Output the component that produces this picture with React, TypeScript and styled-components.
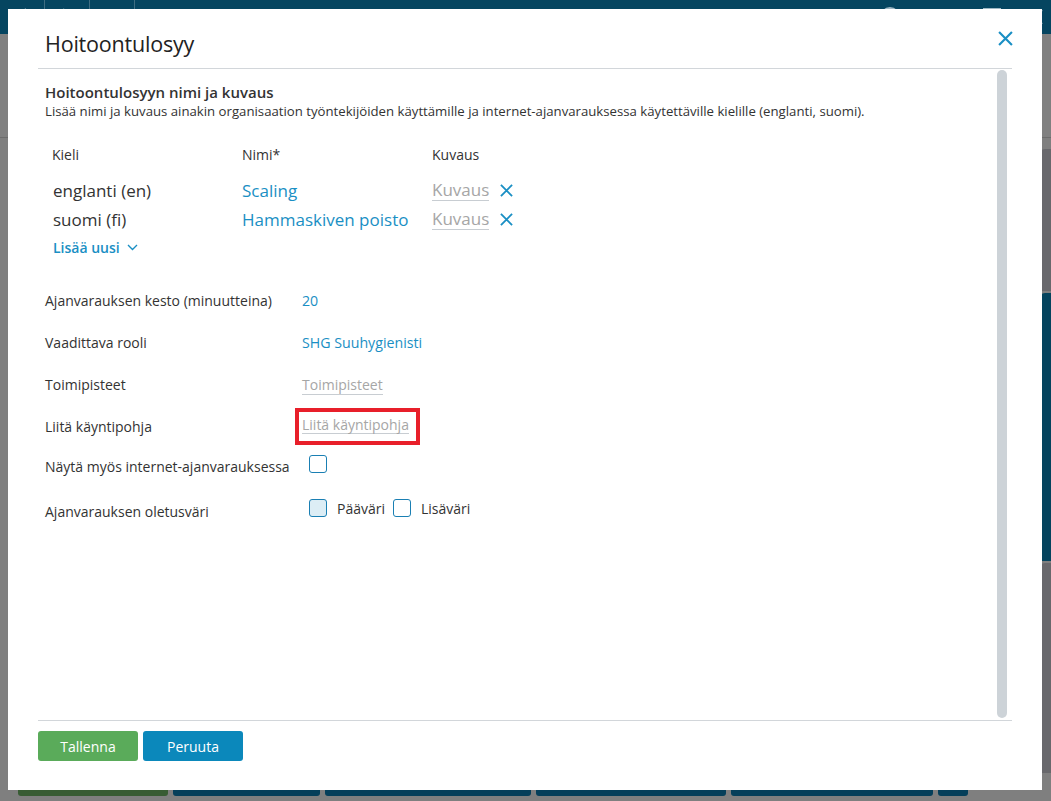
import React from "react";
import styled, { createGlobalStyle } from "styled-components";

const GlobalStyle = createGlobalStyle`
  html, body { margin: 0; padding: 0; }
  body {
    font-family: "Open Sans", "Noto Sans", Arial, sans-serif;
    color: #333;
    background: #7f7f7f;
  }
  * { box-sizing: border-box; }
`;

const Page = styled.div`
  position: relative;
  width: 1051px;
  height: 801px;
  overflow: hidden;
  display: flex;
  flex-direction: column;
  background: #7f7f7f;
`;

const TopBar = styled.div`
  height: 34px;
  background: #054560;
  display: flex;
  align-items: center;
  color: #9fb8c4;
`;

const NavCell = styled.div`
  width: 45px;
  height: 34px;
  border-right: 1px solid #3f6d82;
  display: flex;
  align-items: center;
  justify-content: center;
`;

const TopTitle = styled.div`
  flex: 1;
  text-align: center;
  font-size: 15px;
  color: #b9ccd5;
  padding-left: 280px;
`;

const TopIcons = styled.div`
  display: flex;
  gap: 26px;
  align-items: center;
  padding-right: 8px;
`;

const Main = styled.div`
  flex: 1;
  display: flex;
  flex-direction: column;
`;

const MainRow = styled.div`
  flex: 1;
  display: flex;
`;

const MainFill = styled.div`
  flex: 1;
`;

const TopStrip = styled.div`
  height: 104px;
  border-bottom: 1px solid #6c6c6c;
  background: #808080;
`;

const SideCol = styled.div`
  width: 12px;
  display: flex;
  flex-direction: column;
  padding-top: 9px;
`;

const SideBlock = styled.div<{ $h: number; $c: string }>`
  height: ${(p) => p.$h}px;
  background: ${(p) => p.$c};
  border-radius: 6px 0 0 0;
  margin-top: 2px;
`;

const BackButtons = styled.div`
  height: 40px;
  display: flex;
  gap: 5px;
  padding: 0 0 5px 18px;
`;

const BackButton = styled.div<{ $w: number; $c: string }>`
  width: ${(p) => p.$w}px;
  background: ${(p) => p.$c};
  border-radius: 0 0 3px 3px;
`;

const Dialog = styled.div`
  position: absolute;
  left: 8px;
  top: 9px;
  width: 1034px;
  height: 781px;
  background: #fff;
  display: flex;
  flex-direction: column;
`;

const Header = styled.div`
  height: 60px;
  margin: 0 30px;
  border-bottom: 1px solid #d2d6da;
  display: flex;
  align-items: center;
  justify-content: space-between;
  padding: 9px 0 0 7px;
`;

const Title = styled.h1`
  margin: 0;
  font-size: 21.5px;
  font-weight: 400;
  color: #222;
  letter-spacing: -0.2px;
`;

const CloseButton = styled.button`
  border: 0;
  background: none;
  padding: 0;
  margin-right: -3px;
  margin-top: -9px;
  width: 20px;
  height: 20px;
  display: flex;
  align-items: center;
  justify-content: center;
  cursor: pointer;
`;

const Body = styled.div`
  flex: 1;
  display: flex;
  margin: 0 30px 0 30px;
  min-height: 0;
`;

const Content = styled.div`
  flex: 1;
  padding: 13px 0 0 7px;
`;

const ScrollTrack = styled.div`
  width: 10px;
  margin: 1px 5px 2px 0;
  background: #cdd3d8;
  border-radius: 5px;
`;

const SectionTitle = styled.h2`
  margin: 0;
  font-size: 15px;
  line-height: 20px;
  font-weight: 600;
  color: #333;
`;

const SectionText = styled.p`
  margin: 0;
  font-size: 13.2px;
  line-height: 18px;
  color: #333;
`;

const LangTable = styled.div`
  margin-top: 25px;
  padding-left: 7px;
  display: grid;
  grid-template-columns: 190px 190px auto;
  grid-auto-rows: 29px;
  align-items: center;
`;

const HeadCell = styled.div`
  font-size: 14px;
  color: #333;
  height: 20px;
  line-height: 20px;
  margin-bottom: 9px;
  align-self: start;
  grid-row: 1;
`;

const LangCell = styled.div`
  font-size: 17px;
  color: #333;
  padding-left: 1px;
  margin-top: 3px;
`;

const NameCell = styled.div`
  font-size: 17px;
  color: #1a8fc4;
  margin-top: 3px;
`;

const DescCell = styled.div`
  display: flex;
  align-items: center;
  gap: 11px;
  margin-top: 3px;
`;

const Placeholder = styled.span<{ $size?: number }>`
  font-size: ${(p) => p.$size ?? 14}px;
  color: #a6a6a6;
  border-bottom: 1px solid #c8cdd2;
  line-height: 1.25;
`;

const IconBtn = styled.button`
  border: 0;
  background: none;
  padding: 0;
  display: flex;
  align-items: center;
  cursor: pointer;
`;

const AddNew = styled.div`
  grid-column: 1 / span 3;
  display: flex;
  align-items: center;
  gap: 7px;
  font-size: 14px;
  font-weight: 600;
  color: #1a8fc4;
  padding-left: 1px;
  margin-top: 2px;
`;

const Form = styled.div`
  margin-top: 18px;
  display: flex;
  flex-direction: column;
`;

const FormRow = styled.div<{ $h: number }>`
  height: ${(p) => p.$h}px;
  display: grid;
  grid-template-columns: 257px 1fr;
  align-items: center;
`;

const Label = styled.div<{ $offset?: number }>`
  font-size: 14px;
  color: #333;
  margin-top: ${(p) => p.$offset ?? 0}px;
`;

const Value = styled.div`
  font-size: 14.2px;
  color: #1a8fc4;
`;

const Highlight = styled.div`
  justify-self: start;
  margin-left: -7px;
  border: 4px solid #e81f2a;
  padding: 3px 7px 5px 3px;
  height: 37px;
  display: flex;
  align-items: center;
`;

const CheckGroup = styled.div`
  display: flex;
  align-items: center;
  gap: 10px;
  padding-left: 7px;
  margin-top: -4px;
`;

const CheckItem = styled.label`
  display: flex;
  align-items: center;
  gap: 10px;
  font-size: 14px;
  color: #333;
  margin-right: -2px;
`;

const Box = styled.span<{ $filled?: boolean }>`
  width: 18px;
  height: 18px;
  border: 1.5px solid #1a7fb3;
  border-radius: 3px;
  background: ${(p) => (p.$filled ? "#dcedf5" : "#fff")};
  display: inline-block;
`;

const Footer = styled.div`
  margin: 0 30px;
  border-top: 1px solid #d2d6da;
  padding: 10px 0 29px 0;
  display: flex;
  gap: 5px;
`;

const Button = styled.button<{ $variant: "save" | "cancel" }>`
  width: 100px;
  height: 30px;
  border: 0;
  border-radius: 3px;
  color: #fff;
  font-family: inherit;
  font-size: 14px;
  background: ${(p) => (p.$variant === "save" ? "#5aab5a" : "#0b88bb")};
  cursor: pointer;
`;

const XIcon = ({ size, stroke }: { size: number; stroke: number }) => (
  <svg width={size} height={size} viewBox="0 0 14 14">
    <path d="M1 1 L13 13 M13 1 L1 13" stroke="#1a8fc4" strokeWidth={stroke} fill="none" />
  </svg>
);

const Chevron = () => (
  <svg width="11" height="7" viewBox="0 0 11 7">
    <path d="M1 1 L5.5 5.5 L10 1" stroke="#1a8fc4" strokeWidth="1.4" fill="none" />
  </svg>
);

const langs = [
  { lang: "englanti (en)", name: "Scaling" },
  { lang: "suomi (fi)", name: "Hammaskiven poisto" },
];

export default function App() {
  return (
    <>
      <GlobalStyle />
      <Page>
        <TopBar>
          <NavCell>
            <svg width="12" height="20" viewBox="0 0 12 20">
              <path d="M10 2 L2 10 L10 18" stroke="#9fb8c4" strokeWidth="2" fill="none" />
            </svg>
          </NavCell>
          <NavCell>
            <svg width="12" height="20" viewBox="0 0 12 20">
              <path d="M2 2 L10 10 L2 18" stroke="#6f93a4" strokeWidth="2" fill="none" />
            </svg>
          </NavCell>
          <NavCell>
            <svg width="20" height="20" viewBox="0 0 20 20">
              <circle cx="10" cy="10" r="7" stroke="#9fb8c4" strokeWidth="2" fill="none" />
            </svg>
          </NavCell>
          <TopTitle>Hoitoontulosyyt</TopTitle>
          <TopIcons>
            <svg width="6" height="20" viewBox="0 0 6 20">
              <circle cx="3" cy="4" r="2" fill="#9fb8c4" />
              <circle cx="3" cy="10" r="2" fill="#9fb8c4" />
              <circle cx="3" cy="16" r="2" fill="#9fb8c4" />
            </svg>
            <svg width="22" height="22" viewBox="0 0 22 22">
              <circle cx="11" cy="11" r="9" stroke="#9fb8c4" strokeWidth="2" fill="none" />
            </svg>
            <span style={{ width: 30 }} />
            <svg width="18" height="18" viewBox="0 0 18 18">
              <rect x="1" y="1" width="16" height="16" stroke="#9fb8c4" strokeWidth="2" fill="none" />
              <rect x="1" y="1" width="16" height="4" fill="#9fb8c4" />
            </svg>
            <svg width="16" height="16" viewBox="0 0 16 16">
              <path d="M1 1 L15 15 M15 1 L1 15" stroke="#9fb8c4" strokeWidth="2" />
            </svg>
          </TopIcons>
        </TopBar>
        <Main>
          <TopStrip />
          <MainRow>
            <MainFill />
            <SideCol>
              <SideBlock $h={142} $c="#68686c" />
              <SideBlock $h={268} $c="#04445e" />
              <SideBlock $h={210} $c="#68686c" />
            </SideCol>
          </MainRow>
        </Main>
        <BackButtons>
          <BackButton $w={150} $c="#385c34" />
          <BackButton $w={147} $c="#053f5a" />
          <BackButton $w={206} $c="#053f5a" />
          <BackButton $w={190} $c="#053f5a" />
          <BackButton $w={202} $c="#053f5a" />
          <BackButton $w={30} $c="#053f5a" />
        </BackButtons>

        <Dialog role="dialog" aria-label="Hoitoontulosyy">
          <Header>
            <Title>Hoitoontulosyy</Title>
            <CloseButton aria-label="Sulje">
              <XIcon size={15} stroke={2} />
            </CloseButton>
          </Header>
          <Body>
            <Content>
              <SectionTitle>Hoitoontulosyyn nimi ja kuvaus</SectionTitle>
              <SectionText>
                Lisää nimi ja kuvaus ainakin organisaation työntekijöiden käyttämille ja
                internet-ajanvarauksessa käytettäville kielille (englanti, suomi).
              </SectionText>
              <LangTable>
                <HeadCell>Kieli</HeadCell>
                <HeadCell>Nimi*</HeadCell>
                <HeadCell>Kuvaus</HeadCell>
                {langs.map((l) => (
                  <React.Fragment key={l.lang}>
                    <LangCell>{l.lang}</LangCell>
                    <NameCell>{l.name}</NameCell>
                    <DescCell>
                      <Placeholder $size={17}>Kuvaus</Placeholder>
                      <IconBtn aria-label="Poista">
                        <XIcon size={13} stroke={2} />
                      </IconBtn>
                    </DescCell>
                  </React.Fragment>
                ))}
                <AddNew>
                  Lisää uusi <Chevron />
                </AddNew>
              </LangTable>
              <Form>
                <FormRow $h={42}>
                  <Label>Ajanvarauksen kesto (minuutteina)</Label>
                  <Value>20</Value>
                </FormRow>
                <FormRow $h={42}>
                  <Label>Vaadittava rooli</Label>
                  <Value>SHG Suuhygienisti</Value>
                </FormRow>
                <FormRow $h={42}>
                  <Label>Toimipisteet</Label>
                  <div>
                    <Placeholder $size={14}>Toimipisteet</Placeholder>
                  </div>
                </FormRow>
                <FormRow $h={42}>
                  <Label>Liitä käyntipohja</Label>
                  <Highlight>
                    <Placeholder $size={14}>Liitä käyntipohja</Placeholder>
                  </Highlight>
                </FormRow>
                <FormRow $h={38}>
                  <Label>Näytä myös internet-ajanvarauksessa</Label>
                  <CheckGroup>
                    <Box />
                  </CheckGroup>
                </FormRow>
                <FormRow $h={50}>
                  <Label $offset={2}>Ajanvarauksen oletusväri</Label>
                  <CheckGroup>
                    <CheckItem>
                      <Box $filled />
                      Pääväri
                    </CheckItem>
                    <CheckItem>
                      <Box />
                      Lisäväri
                    </CheckItem>
                  </CheckGroup>
                </FormRow>
              </Form>
            </Content>
            <ScrollTrack />
          </Body>
          <Footer>
            <Button $variant="save">Tallenna</Button>
            <Button $variant="cancel">Peruuta</Button>
          </Footer>
        </Dialog>
      </Page>
    </>
  );
}
